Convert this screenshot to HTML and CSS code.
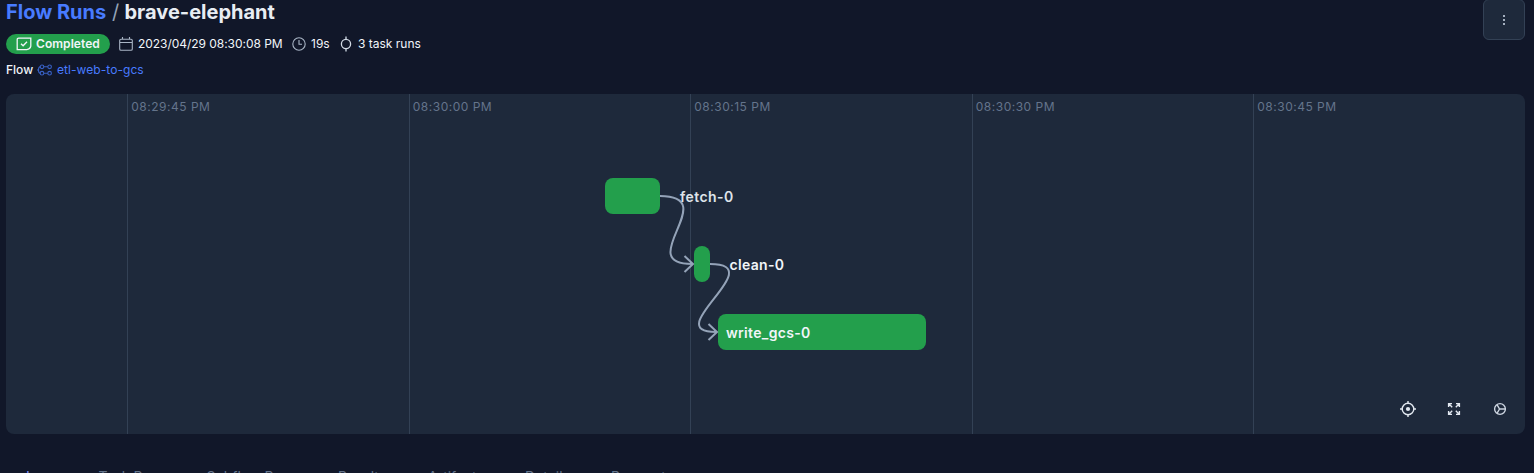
FILE: index.html
```html
<!DOCTYPE html>
<html lang="en">
<head>
<meta charset="utf-8">
<title>Flow Runs / brave-elephant</title>
<link rel="stylesheet" href="styles.css">
</head>
<body>
<main class="page">
  <header class="header">
    <div class="info">
      <h1 class="crumbs"><a class="crumb-link">Flow Runs</a><span class="slash">/</span><span class="current">brave-elephant</span></h1>
      <div class="meta">
        <span class="badge">
          <svg class="badge-icon" width="16" height="14" viewBox="0 0 16 14"><path d="M2.7 1.2H14.8V9.2Q14.2 12.4 10.8 12.6H1.2V2.7Q1.2 1.2 2.7 1.2ZM5 6.7l2.1 2.1L11 4.7"/></svg>
          <span>Completed</span>
        </span>
        <span class="item date"><svg class="icon" width="14" height="14" viewBox="0 0 14 14"><path d="M2 2.2h10q1.3 0 1.3 1.3V12q0 1.3-1.3 1.3H2Q.7 13.3.7 12V3.5Q.7 2.2 2 2.2ZM.7 5.5h12.6M3.5 0v2.2M10.5 0v2.2"/></svg><span class="date-text">2023/04/29 08:30:08 PM</span></span>
        <span class="item duration"><svg class="icon" width="14" height="14" viewBox="0 0 14 14"><circle cx="7" cy="7" r="6.2"/><path d="M7 3v4.2h3"/></svg><span>19s</span></span>
        <span class="item tasks"><svg class="icon bright" width="12" height="16" viewBox="0 0 12 16"><circle cx="6" cy="8" r="4.6"/><path d="M6 .5v3M6 12.5v3"/></svg><span>3 task runs</span></span>
      </div>
      <div class="flow-line"><span>Flow</span><svg class="flow-icon" width="16" height="12" viewBox="0 0 16 12"><circle cx="5" cy="2.8" r="1.8"/><circle cx="5" cy="9.2" r="1.8"/><circle cx="12.6" cy="2.8" r="1.8"/><circle cx="12.6" cy="9.2" r="1.8"/><path d="M6.8 2.8h4M6.8 9.2h4M3.2 2.8Q1.5 3 1.5 6T3.2 9.2M0 6h1.5"/></svg><a class="flow-link">etl-web-to-gcs</a></div>
    </div>
    <button class="menu" aria-label="Menu"><i></i><i></i><i></i></button>
  </header>
  <section class="timeline">
    <div class="grid">
      <div class="tick">08:29:45 PM</div>
      <div class="tick">08:30:00 PM</div>
      <div class="tick">08:30:15 PM</div>
      <div class="tick">08:30:30 PM</div>
      <div class="tick">08:30:45 PM</div>
    </div>
    <div class="node fetch"></div>
    <div class="node clean"></div>
    <div class="node write"></div>
    <svg class="edges" width="1519" height="340" viewBox="6 94 1519 340">
      <path d="M660 196C723 196 632 264 692 264M684.5 256l8.500 8l-8.500 8"/>
      <path d="M710 264C772 264 658 332 716 332M708.500 324l8.500 8l-8.500 8"/>
    </svg>
    <span class="label fetch-label">fetch-0</span>
    <span class="label clean-label">clean-0</span>
    <span class="label write-label">write_gcs-0</span>
    <div class="controls">
      <svg width="16" height="16" viewBox="0 0 16 16"><circle cx="8" cy="8" r="5.8"/><circle class="dot" cx="8" cy="8" r="2.1"/><path d="M8 0v2.5M8 13.500V16M0 8h2.500M13.500 8H16"/></svg>
      <svg width="16" height="16" viewBox="0 0 16 16"><path d="M2.600 6V2.600H6M2.600 2.600l3.600 3.600M10 2.600h3.400V6M13.400 2.600L9.800 6.200M2.600 10v3.400H6M2.600 13.400l3.600-3.600M10 13.400h3.400V10M13.400 13.400L9.800 9.800"/></svg>
      <svg class="gear" width="16" height="16" viewBox="0 0 16 16"><circle cx="8" cy="8" r="5.400"/><path d="M7.500 8h5.900M5 3.600L7.500 8L5 12.400"/></svg>
    </div>
  </section>
  <nav class="tabs">
    <a class="tab active">Logs</a><a class="tab task-tab">Task Runs</a><a class="tab sub-tab">Subflow Runs</a><a class="tab result-tab">Results</a><a class="tab artifact-tab">Artifacts</a><a class="tab detail-tab">Details</a><a class="tab">Parameters</a>
  </nav>
</main>
</body>
</html>
```
FILE: styles.css
```css
* { box-sizing: border-box; }
html, body { height: 100%; }
body { margin: 0; background: #111729; color: #f1f5f9; font-family: Inter, sans-serif; overflow: hidden; }
svg { display: block; flex: none; fill: none; stroke: currentColor; stroke-width: 1.2; }
.page { height: 473px; padding: 0 9px 0 6px; overflow: hidden; }
.header { height: 94px; display: flex; justify-content: space-between; align-items: flex-start; }
.crumbs { margin: 0; height: 25px; display: flex; font-size: 20px; line-height: 24px; font-weight: 700; }
.crumb-link { color: #487bff; width: 106px; }
.slash { width: 12.5px; font-weight: 400; color: #94a3b8; }
.current { color: #e8edf3; }
.meta { display: flex; align-items: center; height: 38px; font-size: 12px; line-height: 16px; white-space: nowrap; }
.badge { width: 104px; height: 20px; display: flex; align-items: center; gap: 4px; padding-left: 10px; border-radius: 10px; background: #239f4c; font-weight: 600; letter-spacing: .05px; margin-right: 9px; }
.badge-icon { stroke-width: 1.3; }
.item { display: flex; align-items: center; gap: 5px; }
.date { width: 173px; }
.date-text { letter-spacing: -.04px; }
.duration { width: 48px; }
.tasks { gap: 6px; }
.icon { color: #a9b5c5; stroke-width: 1.1; }
.bright { color: #d2dae5; stroke-width: 1.3; }
.flow-line { display: flex; align-items: center; height: 14px; margin-top: -1px; font-size: 12px; }
.flow-line span { width: 31px; font-weight: 500; }
.flow-icon { color: #3961c5; stroke-width: 1.1; margin: 1px 4px 0 0; }
.flow-link { color: #487bff; letter-spacing: .06px; }
.menu { width: 42px; height: 41px; margin: -1px 0 0; padding: 0; border: 1px solid #334155; border-radius: 6px; background: #1e293b; display: flex; flex-direction: column; gap: 2px; align-items: center; justify-content: center; }
.menu i { width: 2px; height: 2px; background: #a4afbf; }
.timeline { position: relative; height: 340px; border-radius: 8px; background: #1e293b; overflow: hidden; }
.grid { height: 100%; display: flex; padding-left: 121px; }
.tick { width: 281.5px; flex: none; padding: 5px 0 0 3.3px; border-left: 1px solid #334155; color: #64748b; font-size: 12px; line-height: 16px; letter-spacing: .5px; }
.node { position: absolute; height: 36px; border-radius: 8px; background: #239f4c; }
.fetch { left: 599px; top: 84px; width: 55px; }
.clean { left: 688px; top: 152px; width: 16px; }
.write { left: 712px; top: 220px; width: 208px; }
.edges { position: absolute; left: 0; top: 0; color: #94a3b8; stroke-width: 2; }
.label { position: absolute; font-size: 14px; line-height: 20px; font-weight: 600; letter-spacing: .32px; }
.fetch-label { left: 674px; top: 93px; color: #dfe4ea; letter-spacing: .42px; }
.clean-label { left: 723.5px; top: 161px; }
.write-label { left: 720px; top: 229px; }
.controls { position: absolute; right: 17px; bottom: 17px; display: flex; gap: 30px; color: #e2e8f0; }
.controls svg { stroke-width: 1.4; }
.controls .gear { color: #cbd3df; stroke-width: 1.4; }
.controls .dot { fill: currentColor; stroke: none; }
.tabs { display: flex; padding: 33px 0 0 20px; font-size: 14px; line-height: 20px; white-space: nowrap; color: #64748b; }
.tab { flex: none; }
.active { width: 72.5px; color: #818cf8; }
.task-tab { width: 108px; }
.sub-tab { width: 131.5px; }
.result-tab { width: 90px; }
.artifact-tab { width: 97px; }
.detail-tab { width: 86px; }
```
